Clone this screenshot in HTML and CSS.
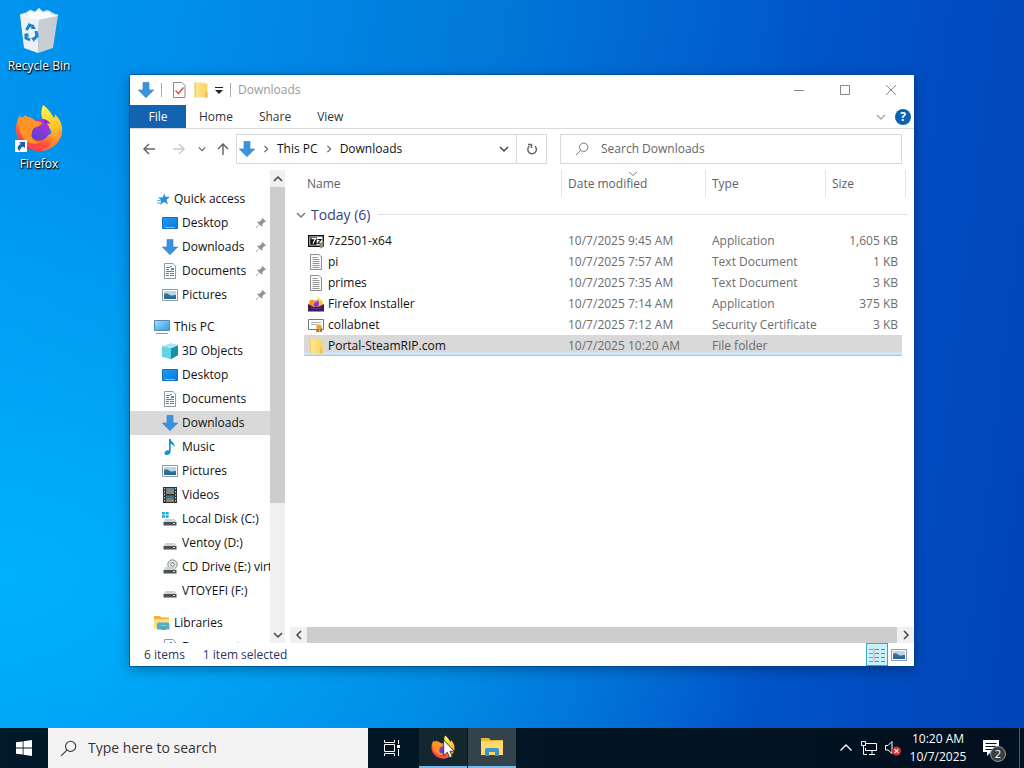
FILE: index.html
```html
<!DOCTYPE html>
<html lang="en">
<head>
    <meta charset="UTF-8">
    <meta name="viewport" content="width=device-width, initial-scale=1.0">
    <title>Downloads</title>
    <link rel="stylesheet" href="styles.css">
</head>
<body>

<!-- Shared icons -->
<svg class="sprite" aria-hidden="true">
    <defs>
        <linearGradient id="gBlue" x1="0" y1="0" x2="1" y2="1"><stop offset="0" stop-color="#1b9bf5"/><stop offset="1" stop-color="#0c7bd8"/></linearGradient>
        <linearGradient id="gScreen" x1="0" y1="0" x2="1" y2="1"><stop offset="0" stop-color="#a5dcff"/><stop offset="1" stop-color="#2f9ae6"/></linearGradient>
        <linearGradient id="gFire" x1="0.8" y1="0" x2="0.25" y2="1"><stop offset="0" stop-color="#fff44f"/><stop offset="0.35" stop-color="#ffa52e"/><stop offset="0.65" stop-color="#ff5a36"/><stop offset="1" stop-color="#e8206a"/></linearGradient>
        <linearGradient id="gFlame" x1="0.4" y1="0" x2="0.6" y2="1"><stop offset="0" stop-color="#fff44f"/><stop offset="0.5" stop-color="#ffc52e"/><stop offset="1" stop-color="#ff6a3a"/></linearGradient>
        <linearGradient id="gGlobe" x1="0.7" y1="0" x2="0.3" y2="1"><stop offset="0" stop-color="#b136d8"/><stop offset="1" stop-color="#5a3fd6"/></linearGradient>
        <linearGradient id="gFolder" x1="0" y1="0" x2="1" y2="0"><stop offset="0" stop-color="#ffe695"/><stop offset="1" stop-color="#f8d463"/></linearGradient>
    </defs>
    <symbol id="down" viewBox="0 0 16 16"><path d="M5 .5h6V8h4.700L8 15.700.3 8H5z" fill="#3b93df" stroke="#2c7cc4" stroke-width=".6"/></symbol>
    <symbol id="check" viewBox="0 0 16 16"><path d="M2.500.5h8.500l3 3v12H2.500z" fill="#fdfdfd" stroke="#8b8b8b"/><path d="M4.500 8.500l3 3 5-6" fill="none" stroke="#d0604c" stroke-width="1.600"/></symbol>
    <symbol id="folder" viewBox="0 0 16 16"><path d="M1.500.5h10v1H14.500v14h-13z" fill="url(#gFolder)"/><path d="M1.500.5H3v15H1.500z" fill="#f0cf6e"/><path d="M12 10.500h2.500v5H12z" fill="#f2c23e"/></symbol>
    <symbol id="star" viewBox="0 0 16 16"><path d="M10.500 2.500l1 3.300 4.500 0-3.500 2.900 1.500 4.800-3.800-2.500L6 14l1.200-4.700L4 6.500h4.500z" fill="#2d8fd8"/><path d="M3 9.500h4M3 12h3" stroke="#5eb0ea"/></symbol>
    <symbol id="desktop" viewBox="0 0 16 16"><path d="M.5 2.500h15v11H.5z" fill="url(#gBlue)" stroke="#0f6fc0"/><path d="M3 12.500h10" stroke="#71c4ff"/></symbol>
    <symbol id="doc" viewBox="0 0 16 16"><path d="M2.500.5h8.500l2.500 2.500v12.500h-11z" fill="#fff" stroke="#8c9aa6"/><path d="M4 4.500h4M4 6.500h3M4 8.500h8M4 10.500h3M8 10.500h4M4 12.500h3M8 12.500h4M8 3.500h2M9 5.500h3M9 6.500h3" stroke="#3e8bcd"/></symbol>
    <symbol id="picture" viewBox="0 0 16 16"><path d="M.5 2.500h15v11H.5z" fill="#fff" stroke="#8d99a5"/><path d="M2 4h12v8H2z" fill="#b5d8f0"/><path d="M2 7c3-2 5 1 7 1.500s3-1 5-.5v4H2z" fill="#3d6e8f"/><path d="M2 10h12v2H2z" fill="#2469a2"/></symbol>
    <symbol id="pc" viewBox="0 0 16 16"><path d="M.5 1.500h15v10H.5z" fill="url(#gScreen)" stroke="#548bb1"/><path d="M2 14.500h12" stroke="#8499a8"/></symbol>
    <symbol id="cube" viewBox="0 0 16 16"><path d="M0 3.500L9 .5l7 2V12l-7 4-9-2.500z" fill="#35b5cf"/><path d="M0 3.500L9 .5l7 2-7 3z" fill="#a4ecf5"/><path d="M9 5.500l7-3V12l-7 4z" fill="#1391ad"/><path d="M0 3.500l9 2V16l-9-2.500z" fill="#62d3e4"/></symbol>
    <symbol id="music" viewBox="0 0 16 16"><path d="M7 0h1.700c.3 3 4.500 3.500 4 8.500-.7-2-2-3.200-4-3.500v7.500C8.500 15 6.500 16 5 16s-2.700-.9-2.500-2.300C2.800 12 5 11 7 11.500z" fill="#1594d6"/></symbol>
    <symbol id="video" viewBox="0 0 16 16"><path d="M1 0h14v16H1z" fill="#2c3238"/><path d="M4 1h8v6H4z" fill="#5c89ad"/><path d="M4 8.500h8V15H4z" fill="#407198"/><path d="M4 5l3-2 5 3v1H4zM4 13l4-2 4 2v2H4z" fill="#9a8650"/><path d="M2.500 1v15M13.500 1v15" stroke="#c5cbd0" stroke-dasharray="1.500 1.500"/></symbol>
    <symbol id="drive" viewBox="0 0 16 16"><path d="M3.500 8h9l2 3h-13z" fill="#cfd2d5"/><path d="M1.500 11h13v3.500h-13z" fill="#4b5053"/><path d="M11 12.500h2" stroke="#b9e6c0"/></symbol>
    <symbol id="osdrive" viewBox="0 0 16 16"><path d="M0 1h3v2.500H0zM3.700 1h3v2.500h-3zM0 4.200h3v2.600H0zM3.700 4.200h3v2.600h-3z" fill="#13aed0"/><use href="#drive"/></symbol>
    <symbol id="cd" viewBox="0 0 16 16"><circle cx="10.500" cy="5.500" r="4.700" fill="#dfe1e3" stroke="#85898c"/><circle cx="10.500" cy="5.500" r="1.700" fill="#fff" stroke="#777"/><use href="#drive"/></symbol>
    <symbol id="library" viewBox="0 0 16 16"><path d="M0 1h6l1.500 1.500H15V13H0z" fill="#f4b03f"/><path d="M0 4h15v9.500H0z" fill="#ffdf7d"/><path d="M3 14.500V9.500C3 8 4 7.500 5 7.500h8c1.500 0 2.500.7 2.500 2v5H12v-4H7v4H3z" fill="#58a9dd"/><path d="M7 11h5v4H7z" fill="#56b76c"/></symbol>
    <symbol id="pin" viewBox="0 0 12 12"><path d="M7.500 1L11 4.500l-1 .7-.6-.1-2 2c.3 1.200 0 2-.7 2.700L4.500 7.600 1.500 11l-.6-.6 3.300-3.100L2 5.200c.8-.7 1.600-.9 2.800-.6l2-2-.1-.7z" fill="#8d9296"/></symbol>
    <symbol id="text" viewBox="0 0 16 16"><path d="M2.500.5h8.500l2.500 2.500v12.500h-11z" fill="#fafafa" stroke="#8b8b8b"/><path d="M4.500 3.500h5M4.500 5.500h7M4.500 7.500h7M4.500 9.500h7M4.500 11.500h7M4.500 13.500h7" stroke="#969696"/></symbol>
    <symbol id="sevenzip" viewBox="0 0 16 16"><path d="M.7 2.700h14.600v10.600H.7z" fill="#fff" stroke="#111" stroke-width="1.400"/><path d="M2.200 4.200h6.500v7.600H2.200z" fill="#111"/><path d="M3.500 5.500h4L5 10.500" fill="none" stroke="#fff" stroke-width="1.300"/><path d="M9.500 6.500h3.500l-3 4h3.500" fill="none" stroke="#111" stroke-width="1.200"/><path d="M11 10.500l4.500-2V14l-3 1.500z" fill="#8a8c78"/></symbol>
    <symbol id="cert" viewBox="0 0 16 16"><path d="M.5 2.500h15v10H.5z" fill="#fff" stroke="#71777b"/><path d="M3 5.500h10M3 7.500h6" stroke="#a9b0b5"/><path d="M9 11h2v4.500l-1.500-1-1.500 1zM12 11h2v4.500l-1.500-1-1 1z" fill="#9d6a1f"/><circle cx="11" cy="10" r="2.700" fill="#e5a637"/></symbol>
    <symbol id="chevDown" viewBox="0 0 10 10"><path d="M1 3l4 4 4-4" fill="none" stroke="currentColor" stroke-width="1.500"/></symbol>
    <symbol id="chevUp" viewBox="0 0 10 10"><path d="M1 7l4-4 4 4" fill="none" stroke="currentColor" stroke-width="1.500"/></symbol>
    <symbol id="chevLeft" viewBox="0 0 10 10"><path d="M7 1L3 5l4 4" fill="none" stroke="currentColor" stroke-width="1.500"/></symbol>
    <symbol id="chevRight" viewBox="0 0 10 10"><path d="M3 1l4 4-4 4" fill="none" stroke="currentColor" stroke-width="1.500"/></symbol>
    <symbol id="arrow" viewBox="0 0 14 14"><path d="M13 7H2M7 2L2 7l5 5" fill="none" stroke="currentColor" stroke-width="1.500"/></symbol>
    <symbol id="magnifier" viewBox="0 0 16 16"><circle cx="10" cy="6" r="4.800" fill="none" stroke="currentColor"/><path d="M6.500 9.500L1 15" stroke="currentColor"/></symbol>
    <symbol id="firefox" viewBox="0 0 48 48">
        <path d="M24 47C11 47 1 37.500 1 25c0-6 1.800-10.500 4-13.500l1.500 4C8 13.500 9.500 12 11 11l.8 4.500c3-.8 6-.3 8.200 1.500l-1 7 10 10 14-9c2 12-7 22-19 22z" fill="url(#gFire)"/>
        <path d="M28 1c7 5 9 10 11 13 1-1 1-2.500.7-4C45 15 48 21 47 28c-1 11-11 19-23 19 9-3 13-9 13-16 0-6-5-9-8-13-3-5-3.500-11-1-17z" fill="url(#gFlame)"/>
        <circle cx="24" cy="26" r="10.500" fill="url(#gGlobe)"/>
        <path d="M27 15c4 0 7 2 8.500 5-2-1-3.500-1-5-.5z" fill="#8c28c4"/>
        <path d="M4.500 14.500c4-3 11-3 16 2.500 2.500 0 5 .5 6.500 2-1 3-4.500 3.500-7 4.500-2 1-3 3-3 5-2 5 2 9 8 10-9 4-18-2-20-10-.8-4-.8-9-.5-14z" fill="#ff9324"/>
        <path d="M5 24c1 10 9 18 20 18 5 0 10-2 13-6-2 7-8 11-15 11C12 46 5 36 5 24z" fill="#ff4f4a" opacity=".7"/>
    </symbol>
    <symbol id="fxinstall" viewBox="0 0 16 16"><use href="#firefox" x="1" y="0" width="14" height="14"/><path d="M0 8c3 1.500 3.500 3 8 3s5-1.500 8-3v7.500H0z" fill="#33205f"/><path d="M3 12c3 1.200 7 1.200 10 0" stroke="#683aa0" fill="none"/></symbol>
</svg>

<div class="desktop">
    <div class="shortcuts">
        <a class="shortcut" href="#">
            <svg class="shortcut-icon" viewBox="0 0 48 48">
                <path d="M6 8l10-3 8 2 8-3 10 5-2 5H7z" fill="#e8edf0"/>
                <path d="M10 8l5-4 5 2 4-4 4 4 7-1 3 6-15 5z" fill="#fbfcfd" stroke="#c7d0d6" stroke-width=".7"/>
                <path d="M5 9l19 4-1 34-14-5z" fill="#eef1f3"/>
                <path d="M24 13l19-4-5 33-15 5z" fill="#c8ced3"/>
                <path d="M5 9l19 4 19-4" fill="none" stroke="#fff" stroke-width="1.500"/>
                <g fill="none" stroke="#1c83c9" stroke-width="3"><path d="M11.500 24l3-5 4 2"/><path d="M21 25l1 5-3 3"/><path d="M15 34l-4-2v-4"/></g>
                <path d="M18 18l3 5-5 0zM21 31l-2 5-3-4zM9 28l4-1 1 4z" fill="#1c83c9"/>
            </svg>
            <span>Recycle Bin</span>
        </a>
        <a class="shortcut" href="#">
            <span class="shortcut-picture">
                <svg class="shortcut-icon"><use href="#firefox"/></svg>
                <svg class="link-badge" viewBox="0 0 12 12"><path d="M0 0h12v12H0z" fill="#fff"/><path d="M4 2h6v6L8 6.500C6 7.500 5 9 5 11 1.500 9 2 6 5.800 4z" fill="#1f5fa8"/></svg>
            </span>
            <span>Firefox</span>
        </a>
    </div>

    <main class="window">
        <header class="titlebar">
            <svg class="icon"><use href="#down"/></svg>
            <span class="divider"></span>
            <div class="quick-access">
                <button class="quick" aria-label="Properties"><svg class="icon"><use href="#check"/></svg></button>
                <button class="quick" aria-label="New folder"><svg class="icon"><use href="#folder"/></svg></button>
                <button class="quick" aria-label="Customize toolbar"><svg class="caret" viewBox="0 0 8 8"><path d="M0 1.500h8" stroke="#222"/><path d="M0 4h8L4 8z" fill="#222"/></svg></button>
            </div>
            <span class="divider"></span>
            <h1 class="title">Downloads</h1>
            <div class="controls">
                <button class="control" aria-label="Minimize"><svg viewBox="0 0 10 10"><path d="M0 5.500h10"/></svg></button>
                <button class="control" aria-label="Maximize"><svg viewBox="0 0 10 10"><path d="M.5.5h9v9h-9z"/></svg></button>
                <button class="control" aria-label="Close"><svg viewBox="0 0 10 10"><path d="M0 0l10 10M10 0L0 10"/></svg></button>
            </div>
        </header>

        <div class="ribbon">
            <button class="tab tab-file">File</button>
            <button class="tab">Home</button>
            <button class="tab">Share</button>
            <button class="tab">View</button>
            <div class="ribbon-end">
                <button class="plain faint" aria-label="Expand ribbon"><svg class="chevron"><use href="#chevDown"/></svg></button>
                <button class="help">?</button>
            </div>
        </div>

        <div class="navbar">
            <div class="history">
                <button class="plain" aria-label="Back"><svg class="arrow"><use href="#arrow"/></svg></button>
                <button class="plain disabled" aria-label="Forward"><svg class="arrow forward"><use href="#arrow"/></svg></button>
                <button class="plain recent" aria-label="Recent"><svg class="chevron small"><use href="#chevDown"/></svg></button>
                <button class="plain" aria-label="Up"><svg class="arrow up"><use href="#arrow"/></svg></button>
            </div>
            <div class="address">
                <svg class="icon"><use href="#down"/></svg>
                <svg class="chevron small"><use href="#chevRight"/></svg>
                <a class="crumb" href="#">This PC</a>
                <svg class="chevron small"><use href="#chevRight"/></svg>
                <a class="crumb" href="#">Downloads</a>
                <button class="plain address-drop" aria-label="Previous locations"><svg class="chevron"><use href="#chevDown"/></svg></button>
                <button class="plain refresh" aria-label="Refresh"><svg viewBox="0 0 12 12"><path d="M3.500 3A4.300 4.300 0 1 0 9 3.200M2 1.500h3.500V5" fill="none" stroke="currentColor" stroke-width="1.500"/></svg></button>
            </div>
            <label class="search">
                <svg><use href="#magnifier"/></svg>
                <input type="text" placeholder="Search Downloads" aria-label="Search Downloads">
            </label>
        </div>

        <div class="content">
            <nav class="sidebar">
                <div class="tree">
                    <div class="group">
                        <a class="node root" href="#"><svg class="icon"><use href="#star"/></svg>Quick access</a>
                        <a class="node" href="#"><svg class="icon"><use href="#desktop"/></svg>Desktop<svg class="pin"><use href="#pin"/></svg></a>
                        <a class="node" href="#"><svg class="icon"><use href="#down"/></svg>Downloads<svg class="pin"><use href="#pin"/></svg></a>
                        <a class="node" href="#"><svg class="icon"><use href="#doc"/></svg>Documents<svg class="pin"><use href="#pin"/></svg></a>
                        <a class="node" href="#"><svg class="icon"><use href="#picture"/></svg>Pictures<svg class="pin"><use href="#pin"/></svg></a>
                    </div>
                    <div class="group">
                        <a class="node root" href="#"><svg class="icon"><use href="#pc"/></svg>This PC</a>
                        <a class="node" href="#"><svg class="icon"><use href="#cube"/></svg>3D Objects</a>
                        <a class="node" href="#"><svg class="icon"><use href="#desktop"/></svg>Desktop</a>
                        <a class="node" href="#"><svg class="icon"><use href="#doc"/></svg>Documents</a>
                        <a class="node current" href="#"><svg class="icon"><use href="#down"/></svg>Downloads</a>
                        <a class="node" href="#"><svg class="icon"><use href="#music"/></svg>Music</a>
                        <a class="node" href="#"><svg class="icon"><use href="#picture"/></svg>Pictures</a>
                        <a class="node" href="#"><svg class="icon"><use href="#video"/></svg>Videos</a>
                        <a class="node" href="#"><svg class="icon"><use href="#osdrive"/></svg>Local Disk (C:)</a>
                        <a class="node" href="#"><svg class="icon"><use href="#drive"/></svg>Ventoy (D:)</a>
                        <a class="node" href="#"><svg class="icon"><use href="#cd"/></svg>CD Drive (E:) virt</a>
                        <a class="node" href="#"><svg class="icon"><use href="#drive"/></svg>VTOYEFI (F:)</a>
                    </div>
                    <div class="group">
                        <a class="node root" href="#"><svg class="icon"><use href="#library"/></svg>Libraries</a>
                        <a class="node" href="#"><svg class="icon"><use href="#doc"/></svg>Documents</a>
                    </div>
                </div>
                <div class="scrollbar vertical">
                    <button class="plain" aria-label="Scroll up"><svg class="chevron"><use href="#chevUp"/></svg></button>
                    <div class="track"><div class="thumb"></div></div>
                    <button class="plain" aria-label="Scroll down"><svg class="chevron"><use href="#chevDown"/></svg></button>
                </div>
            </nav>

            <section class="files">
                <table class="list">
                    <colgroup><col><col class="col-date"><col class="col-type"><col class="col-size"></colgroup>
                    <thead>
                        <tr>
                            <th>Name</th>
                            <th>Date modified<svg class="sort-mark" viewBox="0 0 8 4"><path d="M0 0l4 3.500L8 0" fill="none" stroke="#888"/></svg></th>
                            <th>Type</th>
                            <th>Size</th>
                        </tr>
                    </thead>
                    <tbody>
                        <tr class="group-row">
                            <td colspan="4"><div class="group-title"><svg class="chevron"><use href="#chevDown"/></svg><span>Today (6)</span></div></td>
                        </tr>
                        <tr>
                            <td><div class="name"><svg class="icon"><use href="#sevenzip"/></svg>7z2501-x64</div></td>
                            <td>10/7/2025 9:45 AM</td><td>Application</td><td>1,605 KB</td>
                        </tr>
                        <tr>
                            <td><div class="name"><svg class="icon"><use href="#text"/></svg>pi</div></td>
                            <td>10/7/2025 7:57 AM</td><td>Text Document</td><td>1 KB</td>
                        </tr>
                        <tr>
                            <td><div class="name"><svg class="icon"><use href="#text"/></svg>primes</div></td>
                            <td>10/7/2025 7:35 AM</td><td>Text Document</td><td>3 KB</td>
                        </tr>
                        <tr>
                            <td><div class="name"><svg class="icon"><use href="#fxinstall"/></svg>Firefox Installer</div></td>
                            <td>10/7/2025 7:14 AM</td><td>Application</td><td>375 KB</td>
                        </tr>
                        <tr>
                            <td><div class="name"><svg class="icon"><use href="#cert"/></svg>collabnet</div></td>
                            <td>10/7/2025 7:12 AM</td><td>Security Certificate</td><td>3 KB</td>
                        </tr>
                        <tr class="selected">
                            <td><div class="name"><svg class="icon"><use href="#folder"/></svg>Portal-SteamRIP.com</div></td>
                            <td>10/7/2025 10:20 AM</td><td>File folder</td><td></td>
                        </tr>
                    </tbody>
                </table>
                <div class="scrollbar horizontal">
                    <button class="plain" aria-label="Scroll left"><svg class="chevron"><use href="#chevLeft"/></svg></button>
                    <div class="track"><div class="thumb"></div></div>
                    <button class="plain" aria-label="Scroll right"><svg class="chevron"><use href="#chevRight"/></svg></button>
                </div>
            </section>
        </div>

        <footer class="status">
            <span>6 items</span>
            <span>1 item selected</span>
            <div class="views">
                <button class="view active" aria-label="Details"><svg class="icon" viewBox="0 0 16 16"><path d="M0 2.500h4M0 6.500h4M0 10.500h4M0 14.500h4" stroke="#a08ba8"/><path d="M6 2.500h4M6 6.500h4M6 10.500h4M6 14.500h4M12 2.500h4M12 6.500h4M12 10.500h4M12 14.500h4" stroke="#668494"/><path d="M5 1v14" stroke="#e0a0a6"/></svg></button>
                <button class="view" aria-label="Large icons"><svg class="icon"><use href="#picture"/></svg></button>
            </div>
        </footer>
    </main>

    <footer class="taskbar">
        <button class="start" aria-label="Start"><svg viewBox="0 0 16 16"><path d="M0 2.300L6.700 1.400v6.200H0zM7.500 1.300L16 0v7.600H7.500zM0 8.400h6.700v6.200L0 13.700zM7.500 8.400H16V16l-8.500-1.300z" fill="#fff"/></svg></button>
        <label class="task-search">
            <svg><use href="#magnifier"/></svg>
            <input type="text" placeholder="Type here to search" aria-label="Type here to search">
        </label>
        <button class="task" aria-label="Task View"><svg class="task-view" viewBox="0 0 16 16"><path d="M.5 0v2.500h10V0M.5 16v-2.500h10V16M.5 4.500h10v7H.5zM14.500 0v4M14.500 9v7" fill="none" stroke="#fff"/><path d="M13 5h3v3h-3z" fill="#fff"/></svg></button>
        <button class="task running first" aria-label="Firefox"><svg class="app"><use href="#firefox"/></svg></button>
        <button class="task running focused" aria-label="File Explorer"><svg class="app" viewBox="0 0 24 24"><path d="M1 3h8l1.500 2H23v15H1z" fill="#efb42f"/><path d="M1 6h22v14H1z" fill="#ffda6a"/><path d="M5 21v-6c0-1.500 1-2 2-2h10c1 0 2 .5 2 2v6h-4v-4H9v4z" fill="#3a93cf"/></svg></button>
        <div class="tray">
            <button class="plain" aria-label="Hidden icons"><svg class="tray-chevron" viewBox="0 0 14 14"><path d="M1.500 9.500L7 4l5.500 5.500" fill="none" stroke="#fff" stroke-width="1.300"/></svg></button>
            <svg class="icon" viewBox="0 0 16 16"><path d="M5 3.500h10.500v7H4.500V8M8 14.500h6M11 11v3M.5 1.500h4v4h-4zM2.500 6v8.500H6" fill="none" stroke="#fff"/></svg>
            <svg class="icon" viewBox="0 0 16 16"><path d="M.5 5.500h2.500l4-4v12l-4-3.500H.5z" fill="none" stroke="#fff"/><circle cx="11.500" cy="11" r="4.500" fill="#d3303d"/><path d="M9.700 9.200l3.600 3.600M13.300 9.200l-3.600 3.600" stroke="#fff" stroke-width="1.200"/></svg>
            <time class="clock"><span>10:20 AM</span><span>10/7/2025</span></time>
            <button class="notify" aria-label="Notifications"><svg viewBox="0 0 16 16"><path d="M0 0h16v12H8l-4 4v-4H0z" fill="#fff"/><path d="M2.500 3.500h11M2.500 6.500h11M2.500 9.500h7" stroke="#04131f"/></svg><span class="badge">2</span></button>
            <span class="show-desktop"></span>
        </div>
    </footer>

    <svg class="cursor" viewBox="0 0 12 20"><path d="M.7 1v15.500l3.600-3.300 2.400 5.500 2.500-1.100-2.300-5.300h4.500z" fill="#fff" stroke="#222" stroke-width=".8"/></svg>
</div>

</body>
</html>
```
FILE: styles.css
```css
* {
    box-sizing: border-box;
}

body {
    margin: 0;
    font-family: "Open Sans", "Noto Sans", sans-serif;
    font-size: 12px;
    line-height: 16px;
    color: #111;
}

button,
input {
    font: inherit;
    color: inherit;
    border: 0;
    padding: 0;
    background: none;
}

input {
    outline: 0;
    min-width: 0;
}

a {
    color: inherit;
    text-decoration: none;
}

svg {
    display: block;
    flex-shrink: 0;
}

.sprite {
    position: absolute;
    width: 0;
    height: 0;
}

.icon {
    width: 16px;
    height: 16px;
}

.chevron {
    width: 10px;
    height: 10px;
    color: #444;
}

.chevron.small {
    width: 8px;
    height: 8px;
    color: #666;
}

.plain {
    display: flex;
    align-items: center;
    justify-content: center;
    color: #666;
}

/* Desktop */
.desktop {
    position: relative;
    display: flex;
    flex-direction: column;
    justify-content: space-between;
    height: 100vh;
    overflow: hidden;
    background:
        radial-gradient(ellipse at 0% 75%, rgba(0, 180, 255, 0.9), rgba(0, 165, 255, 0) 55%),
        linear-gradient(97deg, #0095f0 0%, #0090ec 15%, #0078d9 45%, #0053c8 75%, #0044b8 100%);
}

.shortcuts {
    display: flex;
    flex-direction: column;
    gap: 30px;
    width: 78px;
    padding-top: 6px;
}

.shortcut {
    display: flex;
    flex-direction: column;
    align-items: center;
    gap: 4px;
    color: #fff;
    text-shadow: 0 1px 2px #000, 1px 1px 1px #000;
}

.shortcut-icon {
    width: 48px;
    height: 48px;
}

.shortcut-picture {
    position: relative;
}

.link-badge {
    position: absolute;
    left: 0;
    bottom: 0;
    width: 12px;
    height: 12px;
}

/* Explorer window */
.window {
    position: absolute;
    inset: 75px 110px 102px 130px;
    display: flex;
    flex-direction: column;
    background: #fff;
    box-shadow: 0 0 0 1px rgba(0, 70, 140, 0.6), 0 3px 12px rgba(0, 0, 0, 0.35);
}

.titlebar {
    display: flex;
    align-items: center;
    gap: 7px;
    height: 30px;
    padding-left: 8px;
}

.divider {
    width: 1px;
    height: 14px;
    background: #aaa;
}

.quick-access {
    display: flex;
    align-items: center;
    gap: 6px;
    padding-left: 2px;
}

.quick {
    display: flex;
}

.caret {
    width: 8px;
    height: 8px;
}

.title {
    margin: 0;
    font-size: 12px;
    font-weight: 400;
    color: #999;
}

.controls {
    display: flex;
    height: 100%;
    margin-left: auto;
}

.control {
    display: flex;
    align-items: center;
    justify-content: center;
    width: 46px;
}

.control svg {
    width: 10px;
    height: 10px;
    fill: none;
    stroke: #888;
}

.ribbon {
    display: flex;
    height: 24px;
    border-bottom: 1px solid #dadbdc;
}

.tab {
    padding: 0 13px;
    color: #333;
}

.tab-file {
    width: 56px;
    background: #1263b0;
    color: #fff;
}

.ribbon-end {
    display: flex;
    align-items: center;
    gap: 9px;
    margin-left: auto;
    padding-right: 3px;
}

.faint .chevron {
    color: #aaa;
}

.help {
    width: 16px;
    height: 16px;
    border-radius: 50%;
    background: #0a64ad;
    color: #fff;
    font-weight: 700;
}

.navbar {
    display: flex;
    gap: 13px;
    padding: 5px 12px 6px;
}

.history {
    display: flex;
    align-items: center;
    gap: 16px;
    margin-right: -7px;
}

.recent {
    margin: 0 -6px 0 -4px;
}

.arrow {
    width: 14px;
    height: 14px;
}

.arrow.forward {
    transform: rotate(180deg);
}

.arrow.up {
    transform: rotate(90deg);
}

.disabled {
    color: #ccc;
}

.address {
    display: flex;
    flex: 1;
    align-items: center;
    gap: 7px;
    height: 30px;
    padding-left: 2px;
    border: 1px solid #d9d9d9;
}

.address-drop {
    margin-left: auto;
}

.refresh {
    align-self: stretch;
    width: 30px;
    border-left: 1px solid #d9d9d9;
}

.refresh svg {
    width: 12px;
    height: 12px;
}

.search {
    display: flex;
    width: 45%;
    align-items: center;
    gap: 12px;
    height: 30px;
    padding-left: 14px;
    border: 1px solid #d9d9d9;
    color: #666;
}

.search svg {
    width: 14px;
    height: 14px;
}

.search input {
    flex: 1;
}

input::placeholder {
    color: inherit;
    opacity: 1;
}

.content {
    display: flex;
    flex: 1;
    min-height: 0;
}

/* Folder tree */
.sidebar {
    display: flex;
    width: 155px;
}

.tree {
    flex: 1;
    min-width: 0;
    padding-top: 17px;
    overflow: hidden;
}

.group {
    margin-bottom: 8px;
}

.node {
    display: flex;
    align-items: center;
    gap: 4px;
    height: 24px;
    padding-left: 32px;
    white-space: nowrap;
}

.node.root {
    padding-left: 24px;
}

.node.current {
    background: #d9d9d9;
}

.pin {
    width: 12px;
    height: 12px;
    margin: 0 3px 0 auto;
}

/* Scrollbars */
.scrollbar {
    display: flex;
    background: #f0f0f0;
}

.scrollbar.vertical {
    flex-direction: column;
    width: 15px;
}

.scrollbar .plain {
    flex-basis: 17px;
}

.track {
    flex: 1;
}

.thumb {
    background: #cdcdcd;
}

.vertical .thumb {
    height: 72%;
}

.horizontal {
    height: 16px;
    margin-top: auto;
}

.horizontal .thumb {
    height: 100%;
}

/* File list */
.files {
    display: flex;
    flex: 1;
    flex-direction: column;
    min-width: 0;
    padding-left: 5px;
}

.list {
    table-layout: fixed;
    margin: 0 8px 0 14px;
    border-collapse: separate;
    border-spacing: 0;
    color: #6d6d6d;
}

.col-date {
    width: 144px;
}

.col-type {
    width: 120px;
}

.col-size {
    width: 80px;
}

.list th {
    position: relative;
    height: 27px;
    padding: 0 6px 0 3px;
    border-right: 1px solid #e2e2e2;
    font-weight: 400;
    text-align: left;
    color: #5b5f6b;
}

.list th + th {
    padding-left: 6px;
}

.sort-mark {
    position: absolute;
    top: 2px;
    left: 47%;
    width: 8px;
    height: 4px;
}

.list td {
    height: 21px;
    padding: 0 6px;
    background-clip: padding-box;
    white-space: nowrap;
}

.list td:first-child {
    padding-left: 4px;
}

.list td:last-child {
    padding-right: 4px;
    border-right: 4px solid transparent;
    text-align: right;
}

.list .group-row td {
    height: 33px;
    padding: 2px 0 0;
    border: 0;
}

.group-title {
    display: flex;
    align-items: center;
    gap: 5px;
    margin: 0 -2px 0 -8px;
    font-size: 14px;
    color: #35417f;
}

.group-title .chevron {
    color: #777;
}

.group-title::after {
    content: "";
    flex: 1;
    height: 1px;
    margin-left: 3px;
    background: #e2e2e2;
}

.name {
    display: flex;
    align-items: center;
    gap: 4px;
    color: #111;
}

.selected td {
    background-image: linear-gradient(#d9d9d9 17px, #cfe5f5 17px, #cfe5f5 20px, #96cbef 20px);
}

/* Status bar */
.status {
    display: flex;
    align-items: center;
    gap: 18px;
    height: 23px;
    padding-left: 14px;
    color: #2c3566;
}

.views {
    display: flex;
    margin-left: auto;
    padding-right: 4px;
}

.view {
    display: flex;
    align-items: center;
    justify-content: center;
    width: 22px;
    height: 23px;
}

.view.active {
    border: 1px solid #3aa7c8;
    background: #c9f0fb;
}

/* Taskbar */
.taskbar {
    display: flex;
    height: 40px;
    background: linear-gradient(90deg, #001a29, #02101f);
    color: #fff;
}

.start {
    display: flex;
    align-items: center;
    justify-content: center;
    width: 48px;
}

.start svg,
.task-view {
    width: 16px;
    height: 16px;
}

.task-search {
    display: flex;
    align-items: center;
    gap: 11px;
    width: 320px;
    padding-left: 12px;
    background: #f3f3f3;
    color: #333;
    font-size: 14px;
}

.task-search svg {
    width: 17px;
    height: 17px;
}

.task-search input {
    flex: 1;
}

.task {
    display: flex;
    align-items: center;
    justify-content: center;
    width: 48px;
}

.running {
    border-bottom: 2px solid #76b9ed;
    background: #14272f;
}

.running.first {
    margin: 0 1px 0 3px;
}

.running.focused {
    background: #33434b;
}

.app {
    width: 24px;
    height: 24px;
}

.tray {
    display: flex;
    align-items: center;
    gap: 8px;
    margin-left: auto;
}

.tray-chevron {
    width: 14px;
    height: 14px;
}

.clock {
    display: flex;
    flex-direction: column;
    width: 58px;
    line-height: 18px;
    text-align: center;
    white-space: nowrap;
}

.notify {
    position: relative;
    padding: 0 20px 0 8px;
}

.notify svg {
    width: 16px;
    height: 16px;
}

.badge {
    position: absolute;
    top: 6px;
    left: 15px;
    width: 16px;
    height: 16px;
    border: 1px solid #999;
    border-radius: 50%;
    background: #3a3f44;
    font-size: 11px;
    line-height: 14px;
}

.show-desktop {
    align-self: stretch;
    width: 5px;
    margin-left: -8px;
    border-left: 1px solid #4e5b66;
}

.cursor {
    position: absolute;
    left: 443px;
    bottom: 9px;
    width: 12px;
    height: 20px;
}
```
